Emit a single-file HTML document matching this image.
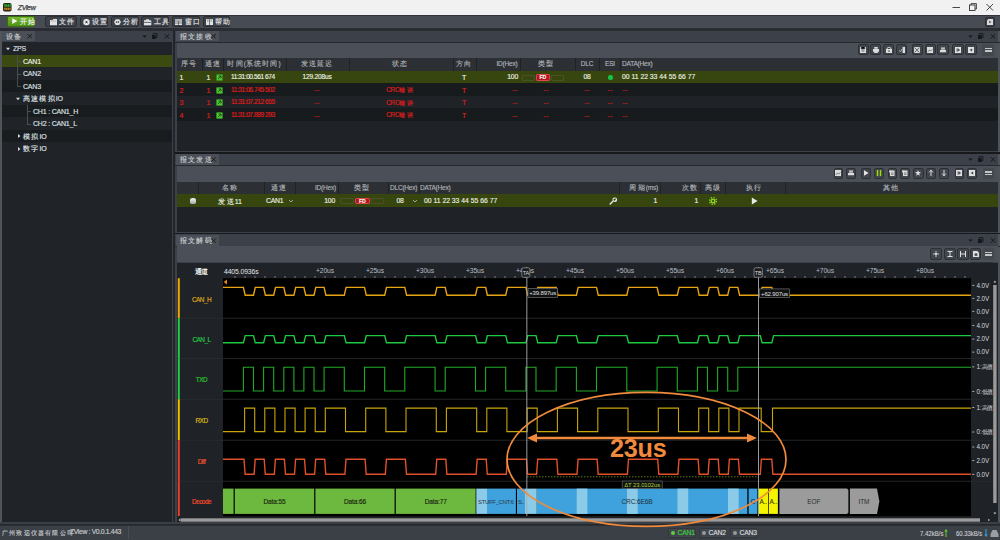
<!DOCTYPE html>
<html><head><meta charset="utf-8"><style>
*{box-sizing:border-box;margin:0;padding:0}
body{width:1000px;height:540px;overflow:hidden;background:#2b2e33;font-family:'Liberation Sans',sans-serif;font-size:7px;color:#d0d3d6;position:relative}
.a{position:absolute}
.c{letter-spacing:1.2px}
.t{position:absolute;white-space:nowrap;line-height:1;letter-spacing:-0.2px;-webkit-text-stroke:0.15px currentColor}
svg text{font-family:'Liberation Sans',sans-serif;letter-spacing:-0.1px}
</style></head><body>
<div class="a" style="left:0px;top:0px;width:1000px;height:15px;background:#f1f1f1;"></div><svg class="a" style="left:0;top:0" width="1000" height="15">
<rect x="3" y="3" width="8.5" height="8.5" rx="1.8" fill="#161616"/>
<rect x="3.8" y="3.8" width="7" height="3.2" fill="#2f9a2a"/>
<rect x="3.8" y="7.6" width="7" height="2.6" fill="#b8801a"/>
<path d="M5,4.2 V10.5 M7.3,4.2 V10.5 M9.6,4.2 V10.5" stroke="#161616" stroke-width="0.7" stroke-dasharray="1 1.2"/>
<path d="M952.5,7.5 H960" stroke="#333" stroke-width="0.9"/>
<rect x="969.5" y="5" width="5.5" height="5.5" fill="none" stroke="#333" stroke-width="0.9"/>
<path d="M971,5 V3.6 H976.4 V9 H975" fill="none" stroke="#333" stroke-width="0.9"/>
<path d="M986.5,4 L993,10.5 M993,4 L986.5,10.5" stroke="#333" stroke-width="0.9"/>
</svg><div class="t" style="left:17.8px;top:4.1px;font-size:7px;color:#3c3c3c;letter-spacing:-0.35px;font-style:italic;-webkit-text-stroke:0.25px #3c3c3c;">ZView</div><div class="a" style="left:0px;top:15px;width:1000px;height:13px;background:#474c54;border-top:1px solid #30343a;"></div><div class="a" style="left:0px;top:28px;width:1000px;height:2.5px;background:#292c31;"></div><div class="a" style="left:7px;top:16.3px;width:28px;height:10.7px;border-radius:2px;background:linear-gradient(#74b82c,#4e9313);border:0.6px solid #3b6e10"></div><svg class="a" style="left:0;top:15px" width="40" height="13"><path d="M12.2,3.2 L17.4,6.1 L12.2,9 Z" fill="#f2f2f2"/></svg><div class="t" style="left:19.5px;top:18.2px;font-size:7px;color:#f4f4f4;"><span class="c">开始</span></div><div class="a" style="left:45px;top:16.3px;width:31.5px;height:10.7px;border-radius:2px;background:#3d4148;border:0.8px solid #2a2e33"></div><svg class="a" style="left:49.95px;top:18.5px" width="8" height="7"><path d="M0,1 H2.6 L3.3,0 H7 V6.2 H0 Z" fill="#e2e2e2"/><path d="M0.8,2 H6.2" stroke="#8a8a8a" stroke-width="0.5"/></svg><div class="t" style="left:59.25px;top:18.2px;font-size:7px;color:#e0e2e4;"><span class="c">文件</span></div><div class="a" style="left:79.5px;top:16.3px;width:28.0px;height:10.7px;border-radius:2px;background:#3d4148;border:0.8px solid #2a2e33"></div><svg class="a" style="left:82.7px;top:18.5px" width="8" height="7"><circle cx="3.5" cy="3.1" r="2.4" fill="none" stroke="#e8e8e8" stroke-width="1.6"/><path d="M3.5,0 V6.2 M0.8,1.5 L6.2,4.7 M0.8,4.7 L6.2,1.5" stroke="#e8e8e8" stroke-width="1"/><circle cx="3.5" cy="3.1" r="1" fill="#30343a"/></svg><div class="t" style="left:92.0px;top:18.2px;font-size:7px;color:#e0e2e4;"><span class="c">设置</span></div><div class="a" style="left:110.5px;top:16.3px;width:28.5px;height:10.7px;border-radius:2px;background:#3d4148;border:0.8px solid #2a2e33"></div><svg class="a" style="left:113.95px;top:18.5px" width="8" height="7"><path d="M1.8,0.3 H5.2 L7,3.1 L5.2,5.9 H1.8 L0,3.1 Z" fill="#e2e2e2"/><circle cx="2.6" cy="3.1" r="0.8" fill="#30343a"/><circle cx="4.4" cy="3.1" r="0.8" fill="#30343a"/></svg><div class="t" style="left:123.25px;top:18.2px;font-size:7px;color:#e0e2e4;"><span class="c">分析</span></div><div class="a" style="left:141px;top:16.3px;width:28px;height:10.7px;border-radius:2px;background:#3d4148;border:0.8px solid #2a2e33"></div><svg class="a" style="left:144.2px;top:18.5px" width="8" height="7"><path d="M0,1.6 H7 V6 H0 Z M2.3,1.6 V0.4 H4.7 V1.6" fill="#e2e2e2" stroke="#e2e2e2" stroke-width="0.6"/><path d="M0,3.4 H7" stroke="#30343a" stroke-width="0.7"/></svg><div class="t" style="left:153.5px;top:18.2px;font-size:7px;color:#e0e2e4;"><span class="c">工具</span></div><div class="a" style="left:172px;top:16.3px;width:28px;height:10.7px;border-radius:2px;background:#3d4148;border:0.8px solid #2a2e33"></div><svg class="a" style="left:175.2px;top:18.5px" width="8" height="7"><path d="M0,0.3 H7 V6 H0 Z" fill="#e2e2e2"/><path d="M0,2 H7 M0,4 H7 M3.5,2 V6" stroke="#30343a" stroke-width="0.6"/></svg><div class="t" style="left:184.5px;top:18.2px;font-size:7px;color:#e0e2e4;"><span class="c">窗口</span></div><div class="a" style="left:203px;top:16.3px;width:27px;height:10.7px;border-radius:2px;background:#3d4148;border:0.8px solid #2a2e33"></div><svg class="a" style="left:205.7px;top:18.5px" width="8" height="7"><path d="M0,0.2 H7 V6 H0 Z" fill="#e2e2e2"/><path d="M3.5,0.2 V6 M1,2 H2.6 M4.4,2 H6" stroke="#30343a" stroke-width="0.6"/></svg><div class="t" style="left:215.0px;top:18.2px;font-size:7px;color:#e0e2e4;"><span class="c">帮助</span></div><div class="a" style="left:985px;top:17px;width:10px;height:10px;border-radius:2px;background:#3d4148;border:0.8px solid #2a2e33"></div><svg class="a" style="left:987px;top:19px" width="6" height="6"><path d="M1.5,0 H6 V6 H0 V1.5 Z" fill="#dadada"/><path d="M2.2,1.8 L4.3,3 L2.2,4.2 Z" fill="#3d4148"/></svg><div class="a" style="left:0px;top:30.5px;width:174px;height:494.5px;background:#3c4048;"></div><div class="a" style="left:175px;top:30.5px;width:825px;height:494.5px;background:#3c4048;"></div><div class="a" style="left:173px;top:30.5px;width:1.8px;height:494.5px;background:#222529;"></div><div class="a" style="left:0px;top:30.5px;width:1.5px;height:494.5px;background:#50555c;"></div><div class="a" style="left:998.4px;top:30.5px;width:1.6px;height:494.5px;background:#4e535a;"></div><div class="a" style="left:1.5px;top:30.8px;width:33.5px;height:10.400000000000002px;background:#4b5058;"></div><div class="t" style="left:5.5px;top:32.5px;font-size:7px;color:#c8cbce;"><span class="c">设备</span></div><svg class="a" style="left:25px;top:30.8px" width="10" height="10.400000000000002"><path d="M2.5,3.000000000000001 L6.9,7.400000000000001 M6.9,3.000000000000001 L2.5,7.400000000000001" stroke="#1a1c1f" stroke-width="1"/></svg><svg class="a" style="left:138.5px;top:30.8px" width="32" height="11">
<path d="M3.3,4.4 H7.7 L5.5,6.8 Z" fill="#15171a"/>
<rect x="13" y="4" width="3.8" height="4" fill="#15171a"/><path d="M14.2,3.8 V2.6 H18 V6.5 H17" fill="none" stroke="#15171a" stroke-width="0.9"/>
<path d="M25.8,3.2 L30.2,7.6 M30.2,3.2 L25.8,7.6" stroke="#15171a" stroke-width="1"/>
</svg><div class="a" style="left:2px;top:42px;width:170px;height:480px;background:#202327;"></div><div class="a" style="left:2px;top:54.8px;width:170px;height:12.5px;background:#3a4a11;"></div><div class="a" style="left:2px;top:79.8px;width:170px;height:12.5px;background:#191c1f;"></div><div class="a" style="left:2px;top:104.8px;width:170px;height:12.5px;background:#191c1f;"></div><div class="a" style="left:2px;top:129.8px;width:170px;height:12.5px;background:#191c1f;"></div><div class="a" style="left:17.3px;top:55px;width:0.8px;height:31.5px;background:#4a4d52;"></div><div class="a" style="left:17.3px;top:61px;width:4px;height:0.8px;background:#4a4d52;"></div><div class="a" style="left:17.3px;top:73.5px;width:4px;height:0.8px;background:#4a4d52;"></div><div class="a" style="left:17.3px;top:86px;width:4px;height:0.8px;background:#4a4d52;"></div><div class="a" style="left:27.3px;top:105px;width:0.8px;height:18.7px;background:#4a4d52;"></div><div class="a" style="left:27.3px;top:111px;width:4px;height:0.8px;background:#4a4d52;"></div><div class="a" style="left:27.3px;top:123.6px;width:4px;height:0.8px;background:#4a4d52;"></div><div class="t" style="left:13px;top:45.099999999999994px;font-size:7px;color:#dfe1e3;">ZPS</div><svg class="a" style="left:5px;top:45.599999999999994px" width="6" height="6"><path d="M1,1.8 H5 L3,4.2 Z" fill="#d8d8d8"/></svg><div class="t" style="left:23px;top:57.599999999999994px;font-size:7px;color:#eef0e8;">CAN1</div><div class="t" style="left:23px;top:70.1px;font-size:7px;color:#dfe1e3;">CAN2</div><div class="t" style="left:23px;top:82.6px;font-size:7px;color:#dfe1e3;">CAN3</div><div class="t" style="left:23px;top:95.1px;font-size:7px;color:#dfe1e3;"><span class="c">高速模拟</span>IO</div><svg class="a" style="left:15px;top:95.6px" width="6" height="6"><path d="M1,1.8 H5 L3,4.2 Z" fill="#d8d8d8"/></svg><div class="t" style="left:33px;top:107.6px;font-size:7px;color:#dfe1e3;">CH1 : CAN1_H</div><div class="t" style="left:33px;top:120.1px;font-size:7px;color:#dfe1e3;">CH2 : CAN1_L</div><div class="t" style="left:23px;top:132.60000000000002px;font-size:7px;color:#dfe1e3;"><span class="c">模拟</span>IO</div><svg class="a" style="left:15.5px;top:133.10000000000002px" width="6" height="6"><path d="M2,1 V5 L4.4,3 Z" fill="#d8d8d8"/></svg><div class="t" style="left:23px;top:145.10000000000002px;font-size:7px;color:#dfe1e3;"><span class="c">数字</span>IO</div><svg class="a" style="left:15.5px;top:145.60000000000002px" width="6" height="6"><path d="M2,1 V5 L4.4,3 Z" fill="#d8d8d8"/></svg><div class="a" style="left:176px;top:30.8px;width:43px;height:10.400000000000002px;background:#4b5058;"></div><div class="t" style="left:180px;top:32.5px;font-size:7px;color:#c8cbce;"><span class="c">报文接收</span></div><svg class="a" style="left:209px;top:30.8px" width="10" height="10.400000000000002"><path d="M2.5,3.000000000000001 L6.9,7.400000000000001 M6.9,3.000000000000001 L2.5,7.400000000000001" stroke="#1a1c1f" stroke-width="1"/></svg><svg class="a" style="left:964.5px;top:30.8px" width="32" height="11">
<path d="M3.3,4.4 H7.7 L5.5,6.8 Z" fill="#15171a"/>
<rect x="13" y="4" width="3.8" height="4" fill="#15171a"/><path d="M14.2,3.8 V2.6 H18 V6.5 H17" fill="none" stroke="#15171a" stroke-width="0.9"/>
<path d="M25.8,3.2 L30.2,7.6 M30.2,3.2 L25.8,7.6" stroke="#15171a" stroke-width="1"/>
</svg><div class="a" style="left:175px;top:41.5px;width:825px;height:1px;background:#26292e;"></div><div class="a" style="left:177px;top:42.5px;width:821px;height:15px;background:#4b5058;"></div><div class="a" style="left:857.5px;top:44.2px;width:11.200000000000045px;height:11.199999999999996px;border-radius:2px;background:#41464d;border:0.8px solid #2c3035"></div><svg class="a" style="left:860.1px;top:46.8px" width="6" height="6"><path d="M0,0 H6 V6 H0 Z" fill="#dcdcdc"/><path d="M1.3,0 V2 H4.7 V0 M1.5,4 H4.5" stroke="#40454c" stroke-width="0.8"/></svg><div class="a" style="left:870.2px;top:44.2px;width:11.299999999999955px;height:11.199999999999996px;border-radius:2px;background:#41464d;border:0.8px solid #2c3035"></div><svg class="a" style="left:872.85px;top:46.8px" width="6" height="6"><path d="M1.3,0 H4.7 V1.8 H1.3 Z M0,2 H6 V4.8 H0 Z M1.2,4 H4.8 V6 H1.2 Z" fill="#dcdcdc"/></svg><div class="a" style="left:883.3px;top:44.2px;width:11.200000000000045px;height:11.199999999999996px;border-radius:2px;background:#41464d;border:0.8px solid #2c3035"></div><svg class="a" style="left:885.9px;top:46.8px" width="6" height="6"><path d="M0,2 H6 V6 H0 Z" fill="#dcdcdc"/><path d="M1.2,2 V1 Q3,-0.6 4.8,1 V2" fill="none" stroke="#dcdcdc" stroke-width="0.9"/><rect x="2.4" y="3.3" width="1.2" height="1.6" fill="#40454c"/></svg><div class="a" style="left:896.2px;top:44.2px;width:11.199999999999932px;height:11.199999999999996px;border-radius:2px;background:#41464d;border:0.8px solid #2c3035"></div><svg class="a" style="left:898.8px;top:46.8px" width="6" height="6"><path d="M0,3.2 L1.5,4.8 L3,2" fill="none" stroke="#bcbcbc" stroke-width="0.9"/><rect x="3.6" y="0" width="2.4" height="6" fill="#dcdcdc"/></svg><div class="a" style="left:911.8px;top:44.2px;width:11.200000000000045px;height:11.199999999999996px;border-radius:2px;background:#41464d;border:0.8px solid #2c3035"></div><svg class="a" style="left:914.4px;top:46.8px" width="6" height="6"><path d="M0,0 H6 V6 H0 Z" fill="#cfcfcf"/><path d="M0.6,0.6 L5.4,5.4 M5.4,0.6 L0.6,5.4" stroke="#50555c" stroke-width="0.8"/></svg><div class="a" style="left:924.5px;top:44.2px;width:11.299999999999955px;height:11.199999999999996px;border-radius:2px;background:#41464d;border:0.8px solid #2c3035"></div><svg class="a" style="left:927.15px;top:46.8px" width="6" height="6"><path d="M0,0 H6 V6 H0 Z" fill="#dcdcdc"/><path d="M0.8,4.8 L2.5,3 L3.6,4 L5.2,2.4" fill="none" stroke="#40454c" stroke-width="0.7"/></svg><div class="a" style="left:937.4px;top:44.2px;width:11.200000000000045px;height:11.199999999999996px;border-radius:2px;background:#41464d;border:0.8px solid #2c3035"></div><svg class="a" style="left:940.0px;top:46.8px" width="6" height="6"><path d="M1,0.5 H5 V1.7 H1 Z M0,3 H6 V5.2 H0 Z" fill="#dcdcdc"/><path d="M1.2,3 L2,2.2 H4 L4.8,3" fill="none" stroke="#dcdcdc" stroke-width="0.8"/></svg><div class="a" style="left:952.4px;top:44.2px;width:11.200000000000045px;height:11.199999999999996px;border-radius:2px;background:#41464d;border:0.8px solid #2c3035"></div><svg class="a" style="left:955.0px;top:46.8px" width="6" height="6"><path d="M0,0 H6 V6 H0 Z" fill="#e0e0e0"/><path d="M2,1.3 V4.7 M2.8,1.8 L4.6,3 L2.8,4.2 Z" stroke="#40454c" stroke-width="0.7" fill="#40454c"/></svg><div class="a" style="left:965.4px;top:44.2px;width:11.300000000000068px;height:11.199999999999996px;border-radius:2px;background:#41464d;border:0.8px solid #2c3035"></div><svg class="a" style="left:968.05px;top:46.8px" width="6" height="6"><path d="M0,0 H6 V6 H0 Z" fill="#e0e0e0"/><path d="M4.2,1.4 L1.6,3 L4.2,4.6 Z" fill="#40454c"/></svg><div class="a" style="left:982px;top:44px;width:12px;height:11.600000000000001px;background:#43484f"></div><div class="a" style="left:984.5px;top:47.599999999999994px;width:7px;height:1.6px;background:#c2c4c6;"></div><div class="a" style="left:984.5px;top:50.3px;width:7px;height:1.6px;background:#c2c4c6;"></div><div class="a" style="left:177px;top:57.5px;width:821px;height:13px;background:#2c2f34;"></div><div class="a" style="left:177px;top:70.5px;width:821px;height:80px;background:#1f2226;"></div><div class="a" style="left:177px;top:70.5px;width:821px;height:12.6px;background:#37460f;"></div><div class="a" style="left:177px;top:83.1px;width:821px;height:12.5px;background:#181b1e;"></div><div class="a" style="left:177px;top:108.1px;width:821px;height:12.6px;background:#181b1e;"></div><div class="a" style="left:202px;top:58px;width:0.8px;height:12.5px;background:#1f2226;"></div><div class="a" style="left:223px;top:58px;width:0.8px;height:12.5px;background:#1f2226;"></div><div class="a" style="left:286px;top:58px;width:0.8px;height:12.5px;background:#1f2226;"></div><div class="a" style="left:349px;top:58px;width:0.8px;height:12.5px;background:#1f2226;"></div><div class="a" style="left:453px;top:58px;width:0.8px;height:12.5px;background:#1f2226;"></div><div class="a" style="left:476px;top:58px;width:0.8px;height:12.5px;background:#1f2226;"></div><div class="a" style="left:520px;top:58px;width:0.8px;height:12.5px;background:#1f2226;"></div><div class="a" style="left:575px;top:58px;width:0.8px;height:12.5px;background:#1f2226;"></div><div class="a" style="left:599px;top:58px;width:0.8px;height:12.5px;background:#1f2226;"></div><div class="a" style="left:620px;top:58px;width:0.8px;height:12.5px;background:#1f2226;"></div><div class="t" style="left:189px;top:60.95px;font-size:6.5px;color:#aeb2b6;transform:translateX(-50%);"><span class="c">序号</span></div><div class="t" style="left:213px;top:60.95px;font-size:6.5px;color:#aeb2b6;transform:translateX(-50%);"><span class="c">通道</span></div><div class="t" style="left:254px;top:60.95px;font-size:6.5px;color:#aeb2b6;transform:translateX(-50%);"><span class="c">时间</span>(<span class="c">系统时间</span>)</div><div class="t" style="left:317px;top:60.95px;font-size:6.5px;color:#aeb2b6;transform:translateX(-50%);"><span class="c">发送延迟</span></div><div class="t" style="left:400px;top:60.95px;font-size:6.5px;color:#aeb2b6;transform:translateX(-50%);"><span class="c">状态</span></div><div class="t" style="left:464px;top:60.95px;font-size:6.5px;color:#aeb2b6;transform:translateX(-50%);"><span class="c">方向</span></div><div class="t" style="left:517.5px;top:60.95px;font-size:6.5px;color:#aeb2b6;transform:translateX(-100%);">ID(Hex)</div><div class="t" style="left:546px;top:60.95px;font-size:6.5px;color:#aeb2b6;transform:translateX(-50%);"><span class="c">类型</span></div><div class="t" style="left:587px;top:60.95px;font-size:6.5px;color:#aeb2b6;transform:translateX(-50%);">DLC</div><div class="t" style="left:610px;top:60.95px;font-size:6.5px;color:#aeb2b6;transform:translateX(-50%);">ESI</div><div class="t" style="left:622px;top:60.95px;font-size:6.5px;color:#aeb2b6;">DATA(Hex)</div><div class="t" style="left:179.5px;top:74.1px;font-size:7px;color:#eceee0;">1</div><div class="t" style="left:206.5px;top:74.1px;font-size:7px;color:#eceee0;">1</div><svg class="a" style="left:216px;top:74px" width="7" height="7"><rect x="0.3" y="0.3" width="6.4" height="6.4" rx="1" fill="#4cc632" stroke="#2a6a1a" stroke-width="0.6"/><path d="M2,5 L5,2 M2.6,2 H5 V4.4" fill="none" stroke="#1c3a10" stroke-width="0.8"/></svg><div class="t" style="left:231px;top:74.3px;font-size:6.6px;color:#eceee0;letter-spacing:-0.45px;">11:31:00.561 674</div><div class="t" style="left:317px;top:74.3px;font-size:6.6px;color:#eceee0;transform:translateX(-50%);letter-spacing:-0.2px;">129.208us</div><div class="t" style="left:464px;top:74.1px;font-size:7px;color:#eceee0;transform:translateX(-50%);">T</div><div class="t" style="left:518px;top:74.19999999999999px;font-size:6.8px;color:#eceee0;transform:translateX(-100%);">100</div><div class="a" style="left:522px;top:74.6px;width:12.5px;height:6px;border:0.6px solid #4a5028;border-radius:1px"></div><div class="a" style="left:536px;top:74.39999999999999px;width:13.5px;height:6.4px;background:#b3161c;border-radius:1.2px;border:0.6px solid #e04848"></div><div class="t" style="left:542.7px;top:75.0px;font-size:5.2px;color:#f4f4f4;transform:translateX(-50%);font-weight:bold;">FD</div><div class="a" style="left:550.5px;top:74.6px;width:13px;height:6px;border:0.6px solid #4a5028;border-radius:1px"></div><div class="t" style="left:587px;top:74.19999999999999px;font-size:6.8px;color:#eceee0;transform:translateX(-50%);">08</div><div class="a" style="left:608.3px;top:75.39999999999999px;width:4.4px;height:4.4px;background:#19c34a;border-radius:50%"></div><div class="t" style="left:622px;top:74.19999999999999px;font-size:6.8px;color:#eceee0;letter-spacing:0px;">00 11 22 33 44 55 66 77</div><div class="t" style="left:179.5px;top:86.64999999999999px;font-size:7px;color:#e01c1c;">2</div><div class="t" style="left:206.5px;top:86.64999999999999px;font-size:7px;color:#e01c1c;">1</div><svg class="a" style="left:216px;top:87px" width="7" height="7"><rect x="0.3" y="0.3" width="6.4" height="6.4" rx="1" fill="#4cc632" stroke="#2a6a1a" stroke-width="0.6"/><path d="M2,5 L5,2 M2.6,2 H5 V4.4" fill="none" stroke="#1c3a10" stroke-width="0.8"/></svg><div class="t" style="left:231px;top:86.85px;font-size:6.6px;color:#e01c1c;letter-spacing:-0.45px;">11:31:06.745 502</div><div class="t" style="left:317px;top:86.39999999999999px;font-size:7.5px;color:#e01c1c;transform:translateX(-50%);letter-spacing:0.2px;">--</div><div class="t" style="left:400px;top:86.94999999999999px;font-size:6.4px;color:#e01c1c;transform:translateX(-50%);">CRC<span class="c">错误</span></div><div class="t" style="left:464px;top:86.64999999999999px;font-size:7px;color:#e01c1c;transform:translateX(-50%);">T</div><div class="t" style="left:515px;top:86.39999999999999px;font-size:7.5px;color:#e01c1c;transform:translateX(-50%);letter-spacing:0.2px;">--</div><div class="t" style="left:546px;top:86.39999999999999px;font-size:7.5px;color:#e01c1c;transform:translateX(-50%);letter-spacing:0.2px;">--</div><div class="t" style="left:587px;top:86.39999999999999px;font-size:7.5px;color:#e01c1c;transform:translateX(-50%);letter-spacing:0.2px;">--</div><div class="t" style="left:610px;top:86.39999999999999px;font-size:7.5px;color:#e01c1c;transform:translateX(-50%);letter-spacing:0.2px;">--</div><div class="t" style="left:625px;top:86.39999999999999px;font-size:7.5px;color:#e01c1c;transform:translateX(-50%);letter-spacing:0.2px;">--</div><div class="t" style="left:179.5px;top:99.19999999999999px;font-size:7px;color:#e01c1c;">3</div><div class="t" style="left:206.5px;top:99.19999999999999px;font-size:7px;color:#e01c1c;">1</div><svg class="a" style="left:216px;top:99px" width="7" height="7"><rect x="0.3" y="0.3" width="6.4" height="6.4" rx="1" fill="#4cc632" stroke="#2a6a1a" stroke-width="0.6"/><path d="M2,5 L5,2 M2.6,2 H5 V4.4" fill="none" stroke="#1c3a10" stroke-width="0.8"/></svg><div class="t" style="left:231px;top:99.39999999999999px;font-size:6.6px;color:#e01c1c;letter-spacing:-0.45px;">11:31:07.212 655</div><div class="t" style="left:317px;top:98.94999999999999px;font-size:7.5px;color:#e01c1c;transform:translateX(-50%);letter-spacing:0.2px;">--</div><div class="t" style="left:400px;top:99.49999999999999px;font-size:6.4px;color:#e01c1c;transform:translateX(-50%);">CRC<span class="c">错误</span></div><div class="t" style="left:464px;top:99.19999999999999px;font-size:7px;color:#e01c1c;transform:translateX(-50%);">T</div><div class="t" style="left:515px;top:98.94999999999999px;font-size:7.5px;color:#e01c1c;transform:translateX(-50%);letter-spacing:0.2px;">--</div><div class="t" style="left:546px;top:98.94999999999999px;font-size:7.5px;color:#e01c1c;transform:translateX(-50%);letter-spacing:0.2px;">--</div><div class="t" style="left:587px;top:98.94999999999999px;font-size:7.5px;color:#e01c1c;transform:translateX(-50%);letter-spacing:0.2px;">--</div><div class="t" style="left:610px;top:98.94999999999999px;font-size:7.5px;color:#e01c1c;transform:translateX(-50%);letter-spacing:0.2px;">--</div><div class="t" style="left:625px;top:98.94999999999999px;font-size:7.5px;color:#e01c1c;transform:translateX(-50%);letter-spacing:0.2px;">--</div><div class="t" style="left:179.5px;top:111.75px;font-size:7px;color:#e01c1c;">4</div><div class="t" style="left:206.5px;top:111.75px;font-size:7px;color:#e01c1c;">1</div><svg class="a" style="left:216px;top:112px" width="7" height="7"><rect x="0.3" y="0.3" width="6.4" height="6.4" rx="1" fill="#4cc632" stroke="#2a6a1a" stroke-width="0.6"/><path d="M2,5 L5,2 M2.6,2 H5 V4.4" fill="none" stroke="#1c3a10" stroke-width="0.8"/></svg><div class="t" style="left:231px;top:111.95px;font-size:6.6px;color:#e01c1c;letter-spacing:-0.45px;">11:31:07.889 293</div><div class="t" style="left:317px;top:111.5px;font-size:7.5px;color:#e01c1c;transform:translateX(-50%);letter-spacing:0.2px;">--</div><div class="t" style="left:400px;top:112.05px;font-size:6.4px;color:#e01c1c;transform:translateX(-50%);">CRC<span class="c">错误</span></div><div class="t" style="left:464px;top:111.75px;font-size:7px;color:#e01c1c;transform:translateX(-50%);">T</div><div class="t" style="left:515px;top:111.5px;font-size:7.5px;color:#e01c1c;transform:translateX(-50%);letter-spacing:0.2px;">--</div><div class="t" style="left:546px;top:111.5px;font-size:7.5px;color:#e01c1c;transform:translateX(-50%);letter-spacing:0.2px;">--</div><div class="t" style="left:587px;top:111.5px;font-size:7.5px;color:#e01c1c;transform:translateX(-50%);letter-spacing:0.2px;">--</div><div class="t" style="left:610px;top:111.5px;font-size:7.5px;color:#e01c1c;transform:translateX(-50%);letter-spacing:0.2px;">--</div><div class="t" style="left:625px;top:111.5px;font-size:7.5px;color:#e01c1c;transform:translateX(-50%);letter-spacing:0.2px;">--</div><div class="a" style="left:177px;top:150.5px;width:821px;height:1px;background:#3c4048;"></div><div class="a" style="left:175px;top:151.5px;width:825px;height:2px;background:#17191c;"></div><div class="a" style="left:176px;top:154.2px;width:43px;height:10.800000000000011px;background:#4b5058;"></div><div class="t" style="left:180px;top:156.1px;font-size:7px;color:#c8cbce;"><span class="c">报文发送</span></div><svg class="a" style="left:209px;top:154.2px" width="10" height="10.800000000000011"><path d="M2.5,3.2000000000000055 L6.9,7.600000000000006 M6.9,3.2000000000000055 L2.5,7.600000000000006" stroke="#1a1c1f" stroke-width="1"/></svg><svg class="a" style="left:964.5px;top:154.2px" width="32" height="11">
<path d="M3.3,4.4 H7.7 L5.5,6.8 Z" fill="#15171a"/>
<rect x="13" y="4" width="3.8" height="4" fill="#15171a"/><path d="M14.2,3.8 V2.6 H18 V6.5 H17" fill="none" stroke="#15171a" stroke-width="0.9"/>
<path d="M25.8,3.2 L30.2,7.6 M30.2,3.2 L25.8,7.6" stroke="#15171a" stroke-width="1"/>
</svg><div class="a" style="left:175px;top:164.6px;width:825px;height:1px;background:#26292e;"></div><div class="a" style="left:177px;top:165.5px;width:821px;height:16px;background:#4b5058;"></div><div class="a" style="left:833.5px;top:168px;width:9.899999999999977px;height:10.800000000000011px;border-radius:2px;background:#41464d;border:0.8px solid #2c3035"></div><svg class="a" style="left:835.45px;top:170.4px" width="6" height="6"><path d="M0,0 H6 V6 H0 Z" fill="#dcdcdc"/><path d="M0.8,4.8 L2.5,3 L3.6,4 L5.2,2.4" fill="none" stroke="#40454c" stroke-width="0.7"/></svg><div class="a" style="left:846px;top:168px;width:10px;height:10.800000000000011px;border-radius:2px;background:#41464d;border:0.8px solid #2c3035"></div><svg class="a" style="left:848.0px;top:170.4px" width="6" height="6"><path d="M1,0.5 H5 V1.7 H1 Z M0,3 H6 V5.2 H0 Z" fill="#dcdcdc"/><path d="M1.2,3 L2,2.2 H4 L4.8,3" fill="none" stroke="#dcdcdc" stroke-width="0.8"/></svg><div class="a" style="left:861px;top:168px;width:10.299999999999955px;height:10.800000000000011px;border-radius:2px;background:#41464d;border:0.8px solid #2c3035"></div><svg class="a" style="left:863.15px;top:170.4px" width="6" height="6"><path d="M1,0.2 L5.6,3 L1,5.8 Z" fill="#e6e6e6"/></svg><div class="a" style="left:874px;top:168px;width:10.399999999999977px;height:10.800000000000011px;border-radius:2px;background:#41464d;border:0.8px solid #2c3035"></div><svg class="a" style="left:876.2px;top:170.4px" width="6" height="6"><path d="M1.5,0 V6 M4.5,0 V6" stroke="#9be000" stroke-width="1.4"/></svg><div class="a" style="left:887.5px;top:168px;width:9.899999999999977px;height:10.800000000000011px;border-radius:2px;background:#41464d;border:0.8px solid #2c3035"></div><svg class="a" style="left:889.45px;top:170.4px" width="6" height="6"><path d="M1,0.5 H5.5 V6 H1 Z" fill="#dcdcdc"/><circle cx="1.2" cy="1.4" r="1.2" fill="#dcdcdc"/><path d="M2,3 H4.5 M2,4.3 H4.5" stroke="#40454c" stroke-width="0.6"/></svg><div class="a" style="left:900px;top:168px;width:10px;height:10.800000000000011px;border-radius:2px;background:#41464d;border:0.8px solid #2c3035"></div><svg class="a" style="left:902.0px;top:170.4px" width="6" height="6"><path d="M1,0.5 H5.5 V6 H1 Z" fill="#dcdcdc"/><circle cx="1.2" cy="1.4" r="1.2" fill="#dcdcdc"/><path d="M2,3 H4.5 M2,4.3 H4.5" stroke="#40454c" stroke-width="0.6"/></svg><div class="a" style="left:913px;top:168px;width:10.5px;height:10.800000000000011px;border-radius:2px;background:#41464d;border:0.8px solid #2c3035"></div><svg class="a" style="left:915.25px;top:170.4px" width="6" height="6"><path d="M3,0 L3.8,2.1 H6 L4.2,3.5 L4.9,5.8 L3,4.4 L1.1,5.8 L1.8,3.5 L0,2.1 H2.2 Z" fill="#e0e0e0"/></svg><div class="a" style="left:926px;top:168px;width:10px;height:10.800000000000011px;border-radius:2px;background:#41464d;border:0.8px solid #2c3035"></div><svg class="a" style="left:928.0px;top:170.4px" width="6" height="6"><path d="M3,6 V0.8" stroke="#e0e0e0" stroke-width="1"/><path d="M1.2,2.4 L3,0 L4.8,2.4" fill="none" stroke="#e0e0e0" stroke-width="0.9"/></svg><div class="a" style="left:939px;top:168px;width:9.700000000000045px;height:10.800000000000011px;border-radius:2px;background:#41464d;border:0.8px solid #2c3035"></div><svg class="a" style="left:940.85px;top:170.4px" width="6" height="6"><path d="M3,0 V5.2" stroke="#e0e0e0" stroke-width="1"/><path d="M1.2,3.6 L3,6 L4.8,3.6" fill="none" stroke="#e0e0e0" stroke-width="0.9"/></svg><div class="a" style="left:954.6px;top:168px;width:9.399999999999977px;height:10.800000000000011px;border-radius:2px;background:#41464d;border:0.8px solid #2c3035"></div><svg class="a" style="left:956.3px;top:170.4px" width="6" height="6"><path d="M0,0 H6 V6 H0 Z" fill="#e0e0e0"/><path d="M2,1.3 V4.7 M2.8,1.8 L4.6,3 L2.8,4.2 Z" stroke="#40454c" stroke-width="0.7" fill="#40454c"/></svg><div class="a" style="left:967px;top:168px;width:10px;height:10.800000000000011px;border-radius:2px;background:#41464d;border:0.8px solid #2c3035"></div><svg class="a" style="left:969.0px;top:170.4px" width="6" height="6"><path d="M0,0 H6 V6 H0 Z" fill="#e0e0e0"/><path d="M4.2,1.4 L1.6,3 L4.2,4.6 Z" fill="#40454c"/></svg><div class="a" style="left:983px;top:167.8px;width:10.700000000000045px;height:11.199999999999989px;background:#43484f"></div><div class="a" style="left:984.85px;top:171.20000000000002px;width:7px;height:1.6px;background:#c2c4c6;"></div><div class="a" style="left:984.85px;top:173.9px;width:7px;height:1.6px;background:#c2c4c6;"></div><div class="a" style="left:177px;top:181.5px;width:821px;height:12.7px;background:#2c2f34;"></div><div class="a" style="left:177px;top:194.2px;width:821px;height:37.5px;background:#1f2226;"></div><div class="a" style="left:177px;top:194.2px;width:821px;height:12.7px;background:#37460f;"></div><div class="a" style="left:197.5px;top:182px;width:0.8px;height:12px;background:#1f2226;"></div><div class="a" style="left:264px;top:182px;width:0.8px;height:12px;background:#1f2226;"></div><div class="a" style="left:294.5px;top:182px;width:0.8px;height:12px;background:#1f2226;"></div><div class="a" style="left:337.5px;top:182px;width:0.8px;height:12px;background:#1f2226;"></div><div class="a" style="left:387.5px;top:182px;width:0.8px;height:12px;background:#1f2226;"></div><div class="a" style="left:419px;top:182px;width:0.8px;height:12px;background:#1f2226;"></div><div class="a" style="left:618.6px;top:182px;width:0.8px;height:12px;background:#1f2226;"></div><div class="a" style="left:660px;top:182px;width:0.8px;height:12px;background:#1f2226;"></div><div class="a" style="left:700px;top:182px;width:0.8px;height:12px;background:#1f2226;"></div><div class="a" style="left:725px;top:182px;width:0.8px;height:12px;background:#1f2226;"></div><div class="a" style="left:785px;top:182px;width:0.8px;height:12px;background:#1f2226;"></div><div class="t" style="left:230px;top:184.75px;font-size:6.5px;color:#aeb2b6;transform:translateX(-50%);"><span class="c">名称</span></div><div class="t" style="left:279px;top:184.75px;font-size:6.5px;color:#aeb2b6;transform:translateX(-50%);"><span class="c">通道</span></div><div class="t" style="left:336px;top:184.75px;font-size:6.5px;color:#aeb2b6;transform:translateX(-100%);">ID(Hex)</div><div class="t" style="left:362.5px;top:184.75px;font-size:6.5px;color:#aeb2b6;transform:translateX(-50%);"><span class="c">类型</span></div><div class="t" style="left:390px;top:184.75px;font-size:6.5px;color:#aeb2b6;">DLC(Hex)</div><div class="t" style="left:420px;top:184.75px;font-size:6.5px;color:#aeb2b6;">DATA(Hex)</div><div class="t" style="left:658px;top:184.75px;font-size:6.5px;color:#aeb2b6;transform:translateX(-100%);"><span class="c">周期</span>(ms)</div><div class="t" style="left:698px;top:184.75px;font-size:6.5px;color:#aeb2b6;transform:translateX(-100%);"><span class="c">次数</span></div><div class="t" style="left:713px;top:184.75px;font-size:6.5px;color:#aeb2b6;transform:translateX(-50%);"><span class="c">高级</span></div><div class="t" style="left:754px;top:184.75px;font-size:6.5px;color:#aeb2b6;transform:translateX(-50%);"><span class="c">执行</span></div><div class="t" style="left:891.5px;top:184.75px;font-size:6.5px;color:#aeb2b6;transform:translateX(-50%);"><span class="c">其他</span></div><div class="a" style="left:190px;top:198.2px;width:5.5px;height:6px;background:linear-gradient(#f4f4f4,#a8a8a8);border-radius:2.5px/1.5px"></div><div class="t" style="left:230px;top:197.7px;font-size:7px;color:#eceee0;transform:translateX(-50%);"><span class="c">发送</span>11</div><div class="t" style="left:266px;top:197.79999999999998px;font-size:6.8px;color:#eceee0;">CAN1</div><svg class="a" style="left:288px;top:198.2px" width="6" height="6"><path d="M1,2 L3,4 L5,2" fill="none" stroke="#bbb" stroke-width="0.8"/></svg><div class="t" style="left:335px;top:197.79999999999998px;font-size:6.8px;color:#eceee0;transform:translateX(-100%);">100</div><div class="a" style="left:340px;top:198.2px;width:13.5px;height:6px;border:0.6px solid #4a5028;border-radius:1px"></div><div class="a" style="left:355px;top:197.89999999999998px;width:14.5px;height:6.6px;background:#b3161c;border-radius:1.2px;border:0.6px solid #e04848"></div><div class="t" style="left:362.2px;top:198.6px;font-size:5.2px;color:#f4f4f4;transform:translateX(-50%);font-weight:bold;">FD</div><div class="a" style="left:371px;top:198.2px;width:13px;height:6px;border:0.6px solid #4a5028;border-radius:1px"></div><div class="t" style="left:400px;top:197.79999999999998px;font-size:6.8px;color:#eceee0;transform:translateX(-50%);">08</div><svg class="a" style="left:412px;top:198.2px" width="6" height="6"><path d="M1,2 L3,4 L5,2" fill="none" stroke="#bbb" stroke-width="0.8"/></svg><div class="t" style="left:424px;top:197.79999999999998px;font-size:6.8px;color:#eceee0;letter-spacing:0px;">00 11 22 33 44 55 66 77</div><svg class="a" style="left:609px;top:197.2px" width="9" height="8"><path d="M1.2,7 L4.4,3.8" stroke="#e8e8e8" stroke-width="1.5" stroke-linecap="round"/><path d="M3.6,3.2 A2.3,2.3 0 1 1 5.6,5 L4.8,4.6 L6.8,2.6 L6.3,1 Z" fill="#e8e8e8"/></svg><div class="t" style="left:657px;top:197.79999999999998px;font-size:6.8px;color:#eceee0;transform:translateX(-100%);">1</div><div class="t" style="left:698px;top:197.79999999999998px;font-size:6.8px;color:#eceee0;transform:translateX(-100%);">1</div><svg class="a" style="left:709px;top:197.2px" width="8" height="8"><circle cx="4" cy="4" r="2.6" fill="#86d21e"/><circle cx="4" cy="4" r="3.5" fill="none" stroke="#86d21e" stroke-width="1.4" stroke-dasharray="1.3 1.45"/><circle cx="4" cy="4" r="1.1" fill="#36440f"/></svg><svg class="a" style="left:751px;top:197.2px" width="8" height="8"><path d="M0.8,0.6 L6.6,4 L0.8,7.4 Z" fill="#e8e8e8"/></svg><div class="a" style="left:177px;top:231.7px;width:821px;height:1px;background:#3c4048;"></div><div class="a" style="left:175px;top:232.7px;width:825px;height:1.8px;background:#17191c;"></div><div class="a" style="left:176px;top:234.8px;width:43px;height:11.199999999999989px;background:#4b5058;"></div><div class="t" style="left:180px;top:236.9px;font-size:7px;color:#c8cbce;"><span class="c">报文解码</span></div><svg class="a" style="left:209px;top:234.8px" width="10" height="11.199999999999989"><path d="M2.5,3.399999999999994 L6.9,7.7999999999999945 M6.9,3.399999999999994 L2.5,7.7999999999999945" stroke="#1a1c1f" stroke-width="1"/></svg><svg class="a" style="left:964.5px;top:234.8px" width="32" height="11">
<path d="M3.3,4.4 H7.7 L5.5,6.8 Z" fill="#15171a"/>
<rect x="13" y="4" width="3.8" height="4" fill="#15171a"/><path d="M14.2,3.8 V2.6 H18 V6.5 H17" fill="none" stroke="#15171a" stroke-width="0.9"/>
<path d="M25.8,3.2 L30.2,7.6 M30.2,3.2 L25.8,7.6" stroke="#15171a" stroke-width="1"/>
</svg><div class="a" style="left:175px;top:245.5px;width:825px;height:1px;background:#26292e;"></div><div class="a" style="left:177px;top:246.3px;width:821px;height:16.2px;background:#4b5058;"></div><div class="a" style="left:930px;top:248px;width:11.700000000000045px;height:11.5px;border-radius:2px;background:#41464d;border:0.8px solid #2c3035"></div><svg class="a" style="left:932.85px;top:250.75px" width="6" height="6"><path d="M3,0 V6 M0,3 H6" stroke="#e0e0e0" stroke-width="0.8"/><circle cx="3" cy="3" r="1" fill="#e0e0e0"/></svg><div class="a" style="left:944px;top:248px;width:12px;height:11.5px;border-radius:2px;background:#41464d;border:0.8px solid #2c3035"></div><svg class="a" style="left:947.0px;top:250.75px" width="6" height="6"><path d="M0.5,0.5 H5.5 M0.5,5.5 H5.5 M3,0.5 V5.5" stroke="#e0e0e0" stroke-width="1"/></svg><div class="a" style="left:957px;top:248px;width:11.5px;height:11.5px;border-radius:2px;background:#41464d;border:0.8px solid #2c3035"></div><svg class="a" style="left:959.75px;top:250.75px" width="6" height="6"><path d="M0.5,0 V6 M5.5,0 V6 M0.5,3 H5.5" stroke="#e0e0e0" stroke-width="1"/></svg><div class="a" style="left:970px;top:248px;width:11px;height:11.5px;border-radius:2px;background:#41464d;border:0.8px solid #2c3035"></div><svg class="a" style="left:972.5px;top:250.75px" width="6" height="6"><path d="M0,0 H4.3 L6,1.7 V6 H0 Z" fill="#e0e0e0"/><rect x="1.6" y="2.4" width="2.8" height="2.4" fill="#40454c"/></svg><div class="a" style="left:983px;top:247.8px;width:10.5px;height:12.0px;background:#43484f"></div><div class="a" style="left:984.75px;top:251.60000000000002px;width:7px;height:1.6px;background:#c2c4c6;"></div><div class="a" style="left:984.75px;top:254.3px;width:7px;height:1.6px;background:#c2c4c6;"></div><div class="a" style="left:177px;top:262.5px;width:821px;height:260px;background:#1f2226;"></div><svg class="a" style="left:0;top:0" width="1000" height="540" viewBox="0 0 1000 540"><rect x="223" y="278.2" width="748" height="238" fill="#000"/><rect x="971" y="262.5" width="22" height="260" fill="#1f2226"/><rect x="234.4" y="276.2" width="1.2" height="1.6" fill="#7c8086"/><rect x="244.4" y="276.2" width="1.2" height="1.6" fill="#7c8086"/><rect x="254.4" y="276.2" width="1.2" height="1.6" fill="#7c8086"/><rect x="264.4" y="276.2" width="1.2" height="1.6" fill="#7c8086"/><rect x="274.4" y="276.2" width="1.2" height="1.6" fill="#7c8086"/><rect x="284.4" y="276.2" width="1.2" height="1.6" fill="#7c8086"/><rect x="294.4" y="276.2" width="1.2" height="1.6" fill="#7c8086"/><rect x="304.4" y="276.2" width="1.2" height="1.6" fill="#7c8086"/><rect x="314.4" y="276.2" width="1.2" height="1.6" fill="#7c8086"/><rect x="324.4" y="276.2" width="1.2" height="1.6" fill="#7c8086"/><rect x="334.4" y="276.2" width="1.2" height="1.6" fill="#7c8086"/><rect x="344.4" y="276.2" width="1.2" height="1.6" fill="#7c8086"/><rect x="354.4" y="276.2" width="1.2" height="1.6" fill="#7c8086"/><rect x="364.4" y="276.2" width="1.2" height="1.6" fill="#7c8086"/><rect x="374.4" y="276.2" width="1.2" height="1.6" fill="#7c8086"/><rect x="384.4" y="276.2" width="1.2" height="1.6" fill="#7c8086"/><rect x="394.4" y="276.2" width="1.2" height="1.6" fill="#7c8086"/><rect x="404.4" y="276.2" width="1.2" height="1.6" fill="#7c8086"/><rect x="414.4" y="276.2" width="1.2" height="1.6" fill="#7c8086"/><rect x="424.4" y="276.2" width="1.2" height="1.6" fill="#7c8086"/><rect x="434.4" y="276.2" width="1.2" height="1.6" fill="#7c8086"/><rect x="444.4" y="276.2" width="1.2" height="1.6" fill="#7c8086"/><rect x="454.4" y="276.2" width="1.2" height="1.6" fill="#7c8086"/><rect x="464.4" y="276.2" width="1.2" height="1.6" fill="#7c8086"/><rect x="474.4" y="276.2" width="1.2" height="1.6" fill="#7c8086"/><rect x="484.4" y="276.2" width="1.2" height="1.6" fill="#7c8086"/><rect x="494.4" y="276.2" width="1.2" height="1.6" fill="#7c8086"/><rect x="504.4" y="276.2" width="1.2" height="1.6" fill="#7c8086"/><rect x="514.4" y="276.2" width="1.2" height="1.6" fill="#7c8086"/><rect x="524.4" y="276.2" width="1.2" height="1.6" fill="#7c8086"/><rect x="534.4" y="276.2" width="1.2" height="1.6" fill="#7c8086"/><rect x="544.4" y="276.2" width="1.2" height="1.6" fill="#7c8086"/><rect x="554.4" y="276.2" width="1.2" height="1.6" fill="#7c8086"/><rect x="564.4" y="276.2" width="1.2" height="1.6" fill="#7c8086"/><rect x="574.4" y="276.2" width="1.2" height="1.6" fill="#7c8086"/><rect x="584.4" y="276.2" width="1.2" height="1.6" fill="#7c8086"/><rect x="594.4" y="276.2" width="1.2" height="1.6" fill="#7c8086"/><rect x="604.4" y="276.2" width="1.2" height="1.6" fill="#7c8086"/><rect x="614.4" y="276.2" width="1.2" height="1.6" fill="#7c8086"/><rect x="624.4" y="276.2" width="1.2" height="1.6" fill="#7c8086"/><rect x="634.4" y="276.2" width="1.2" height="1.6" fill="#7c8086"/><rect x="644.4" y="276.2" width="1.2" height="1.6" fill="#7c8086"/><rect x="654.4" y="276.2" width="1.2" height="1.6" fill="#7c8086"/><rect x="664.4" y="276.2" width="1.2" height="1.6" fill="#7c8086"/><rect x="674.4" y="276.2" width="1.2" height="1.6" fill="#7c8086"/><rect x="684.4" y="276.2" width="1.2" height="1.6" fill="#7c8086"/><rect x="694.4" y="276.2" width="1.2" height="1.6" fill="#7c8086"/><rect x="704.4" y="276.2" width="1.2" height="1.6" fill="#7c8086"/><rect x="714.4" y="276.2" width="1.2" height="1.6" fill="#7c8086"/><rect x="724.4" y="276.2" width="1.2" height="1.6" fill="#7c8086"/><rect x="734.4" y="276.2" width="1.2" height="1.6" fill="#7c8086"/><rect x="744.4" y="276.2" width="1.2" height="1.6" fill="#7c8086"/><rect x="754.4" y="276.2" width="1.2" height="1.6" fill="#7c8086"/><rect x="764.4" y="276.2" width="1.2" height="1.6" fill="#7c8086"/><rect x="774.4" y="276.2" width="1.2" height="1.6" fill="#7c8086"/><rect x="784.4" y="276.2" width="1.2" height="1.6" fill="#7c8086"/><rect x="794.4" y="276.2" width="1.2" height="1.6" fill="#7c8086"/><rect x="804.4" y="276.2" width="1.2" height="1.6" fill="#7c8086"/><rect x="814.4" y="276.2" width="1.2" height="1.6" fill="#7c8086"/><rect x="824.4" y="276.2" width="1.2" height="1.6" fill="#7c8086"/><rect x="834.4" y="276.2" width="1.2" height="1.6" fill="#7c8086"/><rect x="844.4" y="276.2" width="1.2" height="1.6" fill="#7c8086"/><rect x="854.4" y="276.2" width="1.2" height="1.6" fill="#7c8086"/><rect x="864.4" y="276.2" width="1.2" height="1.6" fill="#7c8086"/><rect x="874.4" y="276.2" width="1.2" height="1.6" fill="#7c8086"/><rect x="884.4" y="276.2" width="1.2" height="1.6" fill="#7c8086"/><rect x="894.4" y="276.2" width="1.2" height="1.6" fill="#7c8086"/><rect x="904.4" y="276.2" width="1.2" height="1.6" fill="#7c8086"/><rect x="914.4" y="276.2" width="1.2" height="1.6" fill="#7c8086"/><rect x="924.4" y="276.2" width="1.2" height="1.6" fill="#7c8086"/><rect x="934.4" y="276.2" width="1.2" height="1.6" fill="#7c8086"/><rect x="944.4" y="276.2" width="1.2" height="1.6" fill="#7c8086"/><rect x="954.4" y="276.2" width="1.2" height="1.6" fill="#7c8086"/><rect x="964.4" y="276.2" width="1.2" height="1.6" fill="#7c8086"/><text x="325" y="273.2" text-anchor="middle" fill="#b8bcc0" font-size="6.8">+20us</text><text x="375" y="273.2" text-anchor="middle" fill="#b8bcc0" font-size="6.8">+25us</text><text x="425" y="273.2" text-anchor="middle" fill="#b8bcc0" font-size="6.8">+30us</text><text x="475" y="273.2" text-anchor="middle" fill="#b8bcc0" font-size="6.8">+35us</text><text x="525" y="273.2" text-anchor="middle" fill="#b8bcc0" font-size="6.8">+40us</text><text x="575" y="273.2" text-anchor="middle" fill="#b8bcc0" font-size="6.8">+45us</text><text x="625" y="273.2" text-anchor="middle" fill="#b8bcc0" font-size="6.8">+50us</text><text x="675" y="273.2" text-anchor="middle" fill="#b8bcc0" font-size="6.8">+55us</text><text x="725" y="273.2" text-anchor="middle" fill="#b8bcc0" font-size="6.8">+60us</text><text x="775" y="273.2" text-anchor="middle" fill="#b8bcc0" font-size="6.8">+65us</text><text x="825" y="273.2" text-anchor="middle" fill="#b8bcc0" font-size="6.8">+70us</text><text x="875" y="273.2" text-anchor="middle" fill="#b8bcc0" font-size="6.8">+75us</text><text x="925" y="273.2" text-anchor="middle" fill="#b8bcc0" font-size="6.8">+80us</text><text x="224" y="274.2" fill="#e6e8ea" font-size="6.8">4405.0936s</text><rect x="177.8" y="278.2" width="2" height="40.0" fill="#f0a800"/><text x="201.5" y="301.5" text-anchor="middle" fill="#dca21a" font-size="6.4" style="letter-spacing:-0.5px" stroke="#dca21a" stroke-width="0.2">CAN_H</text><rect x="180" y="317.8" width="813" height="0.8" fill="#2a2d31"/><rect x="177.8" y="318.2" width="2" height="40.400000000000034" fill="#22cc44"/><text x="201.5" y="341.7" text-anchor="middle" fill="#26c444" font-size="6.4" style="letter-spacing:-0.5px" stroke="#26c444" stroke-width="0.2">CAN_L</text><rect x="180" y="358.20000000000005" width="813" height="0.8" fill="#2a2d31"/><rect x="177.8" y="358.6" width="2" height="40.599999999999966" fill="#22cc44"/><text x="201.5" y="382.2" text-anchor="middle" fill="#28c02c" font-size="6.4" style="letter-spacing:-0.5px" stroke="#28c02c" stroke-width="0.2">TXD</text><rect x="180" y="398.8" width="813" height="0.8" fill="#2a2d31"/><rect x="177.8" y="399.2" width="2" height="41.0" fill="#e8c000"/><text x="201.5" y="423.0" text-anchor="middle" fill="#d8b818" font-size="6.4" style="letter-spacing:-0.5px" stroke="#d8b818" stroke-width="0.2">RXD</text><rect x="180" y="439.8" width="813" height="0.8" fill="#2a2d31"/><rect x="177.8" y="440.2" width="2" height="41.0" fill="#e8402a"/><text x="201.5" y="464.0" text-anchor="middle" fill="#f05030" font-size="6.4" style="letter-spacing:-0.5px" stroke="#f05030" stroke-width="0.2">Diff</text><rect x="180" y="480.8" width="813" height="0.8" fill="#2a2d31"/><rect x="177.8" y="481.2" width="2" height="34.80000000000001" fill="#e8402a"/><text x="201.5" y="503.8" text-anchor="middle" fill="#f04a2a" font-size="6.4" style="letter-spacing:-0.5px" stroke="#f04a2a" stroke-width="0.2">Decode</text><text x="201.5" y="273.6" text-anchor="middle" fill="#f0f0f0" font-size="7" font-weight="bold">通道</text><rect x="972.3" y="284.90000000000003" width="2" height="0.8" fill="#d0d0d0"/><text x="976.5" y="287.6" fill="#d8dadc" font-size="6.3">4.0V</text><rect x="972.3" y="297.90000000000003" width="2" height="0.8" fill="#d0d0d0"/><text x="976.5" y="300.6" fill="#d8dadc" font-size="6.3">2.0V</text><rect x="972.3" y="310.90000000000003" width="2" height="0.8" fill="#d0d0d0"/><text x="976.5" y="313.6" fill="#d8dadc" font-size="6.3">0.0V</text><rect x="972.3" y="325.20000000000005" width="2" height="0.8" fill="#d0d0d0"/><text x="976.5" y="327.90000000000003" fill="#d8dadc" font-size="6.3">4.0V</text><rect x="972.3" y="338.70000000000005" width="2" height="0.8" fill="#d0d0d0"/><text x="976.5" y="341.40000000000003" fill="#d8dadc" font-size="6.3">2.0V</text><rect x="972.3" y="351.70000000000005" width="2" height="0.8" fill="#d0d0d0"/><text x="976.5" y="354.40000000000003" fill="#d8dadc" font-size="6.3">0.0V</text><rect x="972.3" y="366.5" width="2" height="0.8" fill="#d0d0d0"/><text x="976.5" y="369.2" fill="#d8dadc" font-size="6.3">1:高值</text><rect x="972.3" y="391.20000000000005" width="2" height="0.8" fill="#d0d0d0"/><text x="976.5" y="393.90000000000003" fill="#d8dadc" font-size="6.3">0:低值</text><rect x="972.3" y="407.20000000000005" width="2" height="0.8" fill="#d0d0d0"/><text x="976.5" y="409.90000000000003" fill="#d8dadc" font-size="6.3">1:高值</text><rect x="972.3" y="431.6" width="2" height="0.8" fill="#d0d0d0"/><text x="976.5" y="434.3" fill="#d8dadc" font-size="6.3">0:低值</text><rect x="972.3" y="446.6" width="2" height="0.8" fill="#d0d0d0"/><text x="976.5" y="449.3" fill="#d8dadc" font-size="6.3">4.0V</text><rect x="972.3" y="460.1" width="2" height="0.8" fill="#d0d0d0"/><text x="976.5" y="462.8" fill="#d8dadc" font-size="6.3">2.0V</text><rect x="972.3" y="473.90000000000003" width="2" height="0.8" fill="#d0d0d0"/><text x="976.5" y="476.6" fill="#d8dadc" font-size="6.3">0.0V</text><path d="M227,279.6 V284.6 L223.8,282.1 Z" fill="#f08a10"/><path d="M223.0,287.4 L243.4,287.4 L245.2,295.2 L253.5,295.2 L255.3,287.4 L263.6,287.4 L265.4,295.2 L273.7,295.2 L275.5,287.4 L283.8,287.4 L285.6,295.2 L293.9,295.2 L295.7,287.4 L303.9,287.4 L305.7,295.2 L314.0,295.2 L315.8,287.4 L324.1,287.4 L325.9,295.2 L344.3,295.2 L346.1,287.4 L364.5,287.4 L366.3,295.2 L384.7,295.2 L386.5,287.4 L404.8,287.4 L406.6,295.2 L435.1,295.2 L436.9,287.4 L445.2,287.4 L447.0,295.2 L475.5,295.2 L477.3,287.4 L485.6,287.4 L487.4,295.2 L505.7,295.2 L507.5,287.4 L525.9,287.4 L527.7,295.2 L536.0,295.2 L537.8,287.4 L556.2,287.4 L558.0,295.2 L576.4,295.2 L578.2,287.4 L596.5,287.4 L598.3,295.2 L626.8,295.2 L628.6,287.4 L657.1,287.4 L658.9,295.2 L677.3,295.2 L679.1,287.4 L697.5,287.4 L699.2,295.2 L707.5,295.2 L709.3,287.4 L717.6,287.4 L719.4,295.2 L727.7,295.2 L729.5,287.4 L737.8,287.4 L739.6,295.2 L760.3,295.2 L762.1,287.4 L771.8,287.4 L773.6,295.2 L971.0,295.2" fill="none" stroke="#e6a312" stroke-width="1.4"/><path d="M223.0,342.8 L243.4,342.8 L245.2,335.6 L253.5,335.6 L255.3,342.8 L263.6,342.8 L265.4,335.6 L273.7,335.6 L275.5,342.8 L283.8,342.8 L285.6,335.6 L293.9,335.6 L295.7,342.8 L303.9,342.8 L305.7,335.6 L314.0,335.6 L315.8,342.8 L324.1,342.8 L325.9,335.6 L344.3,335.6 L346.1,342.8 L364.5,342.8 L366.3,335.6 L384.7,335.6 L386.5,342.8 L404.8,342.8 L406.6,335.6 L435.1,335.6 L436.9,342.8 L445.2,342.8 L447.0,335.6 L475.5,335.6 L477.3,342.8 L485.6,342.8 L487.4,335.6 L505.7,335.6 L507.5,342.8 L525.9,342.8 L527.7,335.6 L536.0,335.6 L537.8,342.8 L556.2,342.8 L558.0,335.6 L576.4,335.6 L578.2,342.8 L596.5,342.8 L598.3,335.6 L626.8,335.6 L628.6,342.8 L657.1,342.8 L658.9,335.6 L677.3,335.6 L679.1,342.8 L697.5,342.8 L699.2,335.6 L707.5,335.6 L709.3,342.8 L717.6,342.8 L719.4,335.6 L727.7,335.6 L729.5,342.8 L737.8,342.8 L739.6,335.6 L760.3,335.6 L762.1,342.8 L771.8,342.8 L773.6,335.6 L971.0,335.6" fill="none" stroke="#1fc93f" stroke-width="1.4"/><path d="M223.0,391.0 L243.4,391.0 L243.4,367.2 L253.5,367.2 L253.5,391.0 L263.6,391.0 L263.6,367.2 L273.7,367.2 L273.7,391.0 L283.8,391.0 L283.8,367.2 L293.9,367.2 L293.9,391.0 L303.9,391.0 L303.9,367.2 L314.0,367.2 L314.0,391.0 L324.1,391.0 L324.1,367.2 L344.3,367.2 L344.3,391.0 L364.5,391.0 L364.5,367.2 L384.7,367.2 L384.7,391.0 L404.8,391.0 L404.8,367.2 L435.1,367.2 L435.1,391.0 L445.2,391.0 L445.2,367.2 L475.5,367.2 L475.5,391.0 L485.6,391.0 L485.6,367.2 L505.7,367.2 L505.7,391.0 L525.9,391.0 L525.9,367.2 L536.0,367.2 L536.0,391.0 L556.2,391.0 L556.2,367.2 L576.4,367.2 L576.4,391.0 L596.5,391.0 L596.5,367.2 L626.8,367.2 L626.8,391.0 L657.1,391.0 L657.1,367.2 L677.3,367.2 L677.3,391.0 L697.5,391.0 L697.5,367.2 L707.5,367.2 L707.5,391.0 L717.6,391.0 L717.6,367.2 L727.7,367.2 L727.7,391.0 L737.8,391.0 L737.8,367.2 L971.0,367.2" fill="none" stroke="#20aa26" stroke-width="1.1"/><path d="M223.0,431.6 L244.6,431.6 L244.6,408.1 L254.7,408.1 L254.7,431.6 L264.8,431.6 L264.8,408.1 L274.9,408.1 L274.9,431.6 L285.0,431.6 L285.0,408.1 L295.1,408.1 L295.1,431.6 L305.1,431.6 L305.1,408.1 L315.2,408.1 L315.2,431.6 L325.3,431.6 L325.3,408.1 L345.5,408.1 L345.5,431.6 L365.7,431.6 L365.7,408.1 L385.9,408.1 L385.9,431.6 L406.0,431.6 L406.0,408.1 L436.3,408.1 L436.3,431.6 L446.4,431.6 L446.4,408.1 L476.7,408.1 L476.7,431.6 L486.8,431.6 L486.8,408.1 L506.9,408.1 L506.9,431.6 L527.1,431.6 L527.1,408.1 L537.2,408.1 L537.2,431.6 L557.4,431.6 L557.4,408.1 L577.6,408.1 L577.6,431.6 L597.8,431.6 L597.8,408.1 L628.0,408.1 L628.0,431.6 L658.3,431.6 L658.3,408.1 L678.5,408.1 L678.5,431.6 L698.7,431.6 L698.7,408.1 L708.7,408.1 L708.7,431.6 L718.8,431.6 L718.8,408.1 L728.9,408.1 L728.9,431.6 L739.0,431.6 L739.0,408.1 L761.2,408.1 L761.2,431.6 L772.5,431.6 L772.5,408.1 L971.0,408.1" fill="none" stroke="#c9a50a" stroke-width="1.1"/><path d="M223.0,459.3 L244.0,459.3 L245.1,474.2 L254.1,474.2 L255.2,459.3 L264.2,459.3 L265.3,474.2 L274.3,474.2 L275.4,459.3 L284.4,459.3 L285.5,474.2 L294.5,474.2 L295.6,459.3 L304.5,459.3 L305.6,474.2 L314.6,474.2 L315.7,459.3 L324.7,459.3 L325.8,474.2 L344.9,474.2 L346.0,459.3 L365.1,459.3 L366.2,474.2 L385.3,474.2 L386.4,459.3 L405.4,459.3 L406.5,474.2 L435.7,474.2 L436.8,459.3 L445.8,459.3 L446.9,474.2 L476.1,474.2 L477.2,459.3 L486.2,459.3 L487.3,474.2 L506.3,474.2 L507.4,459.3 L526.5,459.3 L527.6,474.2 L536.6,474.2 L537.7,459.3 L556.8,459.3 L557.9,474.2 L577.0,474.2 L578.1,459.3 L597.1,459.3 L598.2,474.2 L627.4,474.2 L628.5,459.3 L657.7,459.3 L658.8,474.2 L677.9,474.2 L679.0,459.3 L698.1,459.3 L699.2,474.2 L708.1,474.2 L709.2,459.3 L718.2,459.3 L719.3,474.2 L728.3,474.2 L729.4,459.3 L738.4,459.3 L739.5,474.2 L760.3,474.2 L761.4,459.3 L771.8,459.3 L772.9,474.2 L971.0,474.2" fill="none" stroke="#e0502a" stroke-width="1.4"/><path d="M527,476.8 H757.5" stroke="#7a9a20" stroke-width="0.8" stroke-dasharray="1.5 1.5"/><rect x="223" y="488.6" width="10.599999999999994" height="25.3" fill="#6db83e"/><rect x="234.8" y="488.6" width="79.39999999999998" height="25.3" fill="#6db83e"/><text x="274.5" y="504.2" text-anchor="middle" fill="#18240f" font-size="6.5" stroke="#18240f" stroke-width="0.15">Data:55</text><rect x="315.4" y="488.6" width="79.20000000000005" height="25.3" fill="#6db83e"/><text x="355.0" y="504.2" text-anchor="middle" fill="#18240f" font-size="6.5" stroke="#18240f" stroke-width="0.15">Data:66</text><rect x="395.8" y="488.6" width="79.80000000000001" height="25.3" fill="#6db83e"/><text x="435.70000000000005" y="504.2" text-anchor="middle" fill="#18240f" font-size="6.5" stroke="#18240f" stroke-width="0.15">Data:77</text><rect x="476.3" y="488.6" width="10.699999999999989" height="25.3" fill="#8ccbe8"/><rect x="487" y="488.6" width="28.899999999999977" height="25.3" fill="#3fa2dc"/><text x="495.8" y="504" text-anchor="middle" fill="#2a3a4a" font-size="6" style="letter-spacing:-0.35px">STUFF_CNT:6</text><rect x="517" y="488.6" width="8" height="25.3" fill="#3fa2dc"/><text x="518" y="504" fill="#2a3a4a" font-size="6" style="letter-spacing:-0.3px">S..</text><rect x="525" y="488.6" width="11.799999999999955" height="25.3" fill="#8ccbe8"/><rect x="536.8" y="488.6" width="210.5" height="25.3" fill="#3fa2dc"/><rect x="576.7" y="488.6" width="10.700000000000045" height="25.3" fill="#8ccbe8"/><rect x="627" y="488.6" width="10.700000000000045" height="25.3" fill="#8ccbe8"/><rect x="677.5" y="488.6" width="10.700000000000045" height="25.3" fill="#8ccbe8"/><rect x="728" y="488.6" width="10.700000000000045" height="25.3" fill="#8ccbe8"/><text x="637" y="504.2" text-anchor="middle" fill="#203040" font-size="6.5">CRC:6E6B</text><rect x="748.6" y="488.6" width="8.799999999999955" height="25.3" fill="#3fa2dc"/><text x="753.0" y="504.2" text-anchor="middle" fill="#203040" font-size="6.5" stroke="#203040" stroke-width="0.15">C</text><rect x="758.5" y="488.6" width="9.5" height="25.3" fill="#f4f400"/><text x="763.25" y="504.2" text-anchor="middle" fill="#404000" font-size="6.5" stroke="#404000" stroke-width="0.15">A..</text><rect x="768.7" y="488.6" width="9.199999999999932" height="25.3" fill="#f4f400"/><text x="773.3" y="504.2" text-anchor="middle" fill="#404000" font-size="6.5" stroke="#404000" stroke-width="0.15">A..</text><path d="M779.4,488.6 H847 L848.4,490 V512.5 L847,513.9 H779.4 Z" fill="#9b9b9b"/><text x="813.8" y="504.2" text-anchor="middle" fill="#303030" font-size="6.5">EOF</text><path d="M849.9,488.6 H877 L879.4,501.2 L877,513.9 H849.9 Z" fill="#9b9b9b"/><text x="864" y="504.2" text-anchor="middle" fill="#303030" font-size="6.5">ITM</text><rect x="526.4" y="267" width="0.9" height="249" fill="#a8acb0"/><rect x="758" y="267" width="0.9" height="249" fill="#a8acb0"/><rect x="521.8" y="267.8" width="8" height="9.4" rx="1.5" fill="#1a1c1f" stroke="#9a9ea2" stroke-width="0.7"/><text x="525.8" y="275" text-anchor="middle" fill="#d8d8d8" font-size="5.6" style="letter-spacing:-0.2px">TA</text><rect x="754" y="267.8" width="8.4" height="9.4" rx="1.5" fill="#1a1c1f" stroke="#9a9ea2" stroke-width="0.7"/><text x="758.2" y="275" text-anchor="middle" fill="#d8d8d8" font-size="5.6" style="letter-spacing:-0.2px">TB</text><rect x="528" y="288.4" width="29.5" height="9" fill="#111" stroke="#6a6e72" stroke-width="0.7"/><text x="542.7" y="295.2" text-anchor="middle" fill="#e0e2e4" font-size="6" style="letter-spacing:-0.15px">+39.897us</text><rect x="759.5" y="288.9" width="30" height="8.6" fill="#111" stroke="#6a6e72" stroke-width="0.7"/><text x="774.5" y="295.5" text-anchor="middle" fill="#e0e2e4" font-size="6" style="letter-spacing:-0.15px">+62.907us</text><rect x="622.2" y="481" width="40" height="7.4" fill="#111" stroke="#6a6e72" stroke-width="0.6"/><text x="642.2" y="487" text-anchor="middle" fill="#a8d030" font-size="6" style="letter-spacing:-0.1px">ΔT 23.0102us</text><rect x="180.5" y="518.3" width="799.5" height="3.4" fill="#9a9a9a"/><path d="M178.5,520 L180.2,518.8 V521.2 Z" fill="#cfcfcf"/><path d="M990,520 L988.3,518.8 V521.2 Z" fill="#cfcfcf"/><rect x="993.2" y="285" width="3.4" height="218" fill="#9a9a9a"/><path d="M994.9,280.5 L993.6,282.6 H996.2 Z M994.9,514.5 L993.6,512.4 H996.2 Z" fill="#cfcfcf"/></svg><div class="a" style="left:0px;top:522.3px;width:1000px;height:1.9px;background:#3a3e45;"></div><div class="a" style="left:0px;top:524.2px;width:1000px;height:1.3px;background:#25282c;"></div><div class="a" style="left:0px;top:525.5px;width:1000px;height:14.5px;background:#3b3f46;"></div><div class="t" style="left:2px;top:529.6999999999999px;font-size:6.2px;color:#c8cbce;letter-spacing:-0.3px;"><span class="c">广州致远仪器有限公司</span></div><div class="t" style="left:70px;top:529.4px;font-size:6.8px;color:#c8cbce;letter-spacing:-0.35px;">ZView : V0.0.1.443</div><div class="a" style="left:128px;top:526px;width:0.8px;height:13px;background:#4a4e55;"></div><div class="a" style="left:668px;top:528px;width:27.5px;height:10px;border-radius:2px;background:#41464d;border:0.7px solid #33373c"></div><div class="a" style="left:671px;top:530.8px;width:4.4px;height:4.4px;border-radius:50%;background:#5ad040"></div><div class="t" style="left:677.5px;top:529.6px;font-size:6.8px;color:#3cd23c;">CAN1</div><div class="a" style="left:699px;top:528px;width:27px;height:10px;border-radius:2px;background:#41464d;border:0.7px solid #33373c"></div><div class="a" style="left:702px;top:530.8px;width:4.4px;height:4.4px;border-radius:50%;background:#9a9a9a"></div><div class="t" style="left:708.5px;top:529.6px;font-size:6.8px;color:#d8dadc;">CAN2</div><div class="a" style="left:730px;top:528px;width:26.5px;height:10px;border-radius:2px;background:#41464d;border:0.7px solid #33373c"></div><div class="a" style="left:733px;top:530.8px;width:4.4px;height:4.4px;border-radius:50%;background:#9a9a9a"></div><div class="t" style="left:739.5px;top:529.6px;font-size:6.8px;color:#d8dadc;">CAN3</div><div class="t" style="left:920px;top:529.5px;font-size:7px;color:#c8cbce;letter-spacing:0px;transform:scaleX(0.86);transform-origin:0 0;">7.42kB/s</div><svg class="a" style="left:943px;top:527px" width="6" height="12"><path d="M3,3.5 V10" stroke="#5ccc30" stroke-width="1.1"/><path d="M1.2,4.6 L3,2 L4.8,4.6 Z" fill="#5ccc30"/></svg><div class="t" style="left:956px;top:529.5px;font-size:7px;color:#c8cbce;letter-spacing:0px;transform:scaleX(0.84);transform-origin:0 0;">60.33kB/s</div><svg class="a" style="left:982.5px;top:527px" width="6" height="12"><path d="M3,2 V8.5" stroke="#30a0e0" stroke-width="1.1"/><path d="M1.2,7.4 L3,10 L4.8,7.4 Z" fill="#30a0e0"/></svg><svg class="a" style="left:988.5px;top:527px" width="11" height="12"><path d="M1.5,7 L3.5,3 H7.5 L9.5,7 V10 H1.5 Z" fill="#9a9ea2"/></svg><svg class="a" style="left:0;top:0" width="1000" height="540" viewBox="0 0 1000 540"><ellipse cx="646.5" cy="459.4" rx="139.5" ry="67" fill="none" stroke="#f08a3c" stroke-width="1.7"/><path d="M535,438 H749" stroke="#f08a3c" stroke-width="2.4"/><path d="M527,438 L537,433.6 L537,442.4 Z M757,438 L747,433.6 L747,442.4 Z" fill="#f08a3c"/><text x="638.2" y="457.2" text-anchor="middle" fill="#f08a3c" font-size="25.2" font-weight="bold" style="letter-spacing:-0.2px">23us</text></svg>
</body></html>
